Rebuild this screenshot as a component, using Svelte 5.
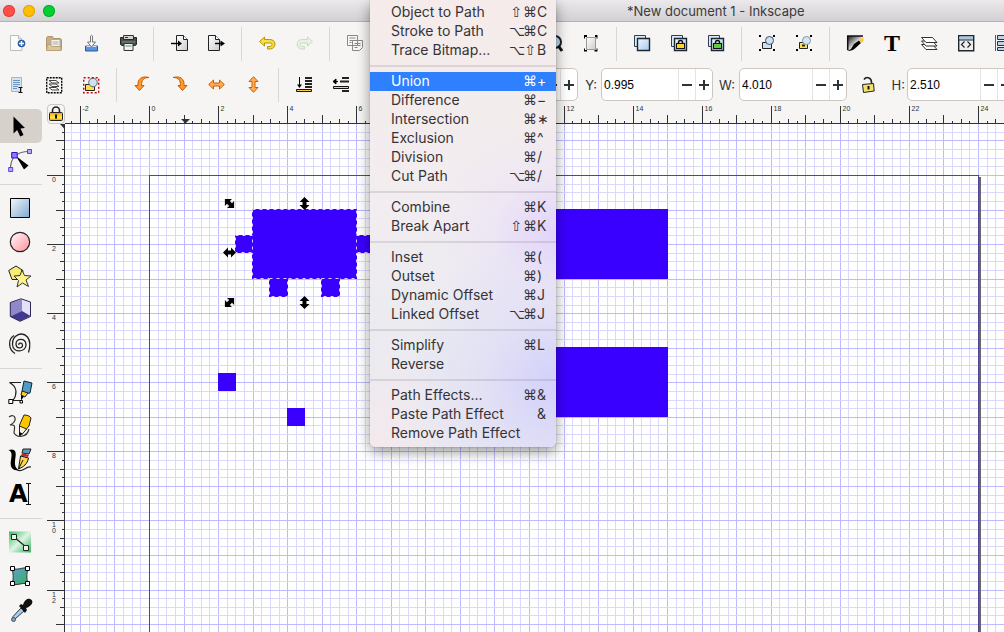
<script lang="ts">
    type Entry = { label: string; mods?: string; key?: string };

    const menuGroups: Entry[][] = [
        [
            { label: "Object to Path", mods: "⇧⌘", key: "C" },
            { label: "Stroke to Path", mods: "⌥⌘", key: "C" },
            { label: "Trace Bitmap...", mods: "⌥⇧", key: "B" },
        ],
        [
            { label: "Union", mods: "⌘", key: "+" },
            { label: "Difference", mods: "⌘", key: "−" },
            { label: "Intersection", mods: "⌘", key: "∗" },
            { label: "Exclusion", mods: "⌘", key: "^" },
            { label: "Division", mods: "⌘", key: "/" },
            { label: "Cut Path", mods: "⌥⌘", key: "/" },
        ],
        [
            { label: "Combine", mods: "⌘", key: "K" },
            { label: "Break Apart", mods: "⇧⌘", key: "K" },
        ],
        [
            { label: "Inset", mods: "⌘", key: "(" },
            { label: "Outset", mods: "⌘", key: ")" },
            { label: "Dynamic Offset", mods: "⌘", key: "J" },
            { label: "Linked Offset", mods: "⌥⌘", key: "J" },
        ],
        [{ label: "Simplify", mods: "⌘", key: "L" }, { label: "Reverse" }],
        [
            { label: "Path Effects...", mods: "⌘", key: "&" },
            { label: "Paste Path Effect", key: "&" },
            { label: "Remove Path Effect" },
        ],
    ];

    const commands = [
        "new", "open", "save", "print", "|",
        "import", "export", "|",
        "undo", "redo", "|",
        "copy", "copy", "copy", "|",
        "zoom", "zoom", "zoom", "zoom page", "|",
        "duplicate", "clone", "unlink clone", "|",
        "group", "ungroup", "|",
        "fill and stroke", "text dialog", "layers", "xml editor", "align",
    ];
    const selectActions = [
        "select all", "select in layers", "deselect", "|",
        "rotate left", "rotate right", "flip horizontal", "flip vertical", "|",
        "to bottom", "lower", "lower", "lower", "|",
    ];
    const tools = [
        "selector", "node", "|",
        "rectangle", "ellipse", "star", "box", "spiral", "|",
        "pen", "pencil", "calligraphy", "text", "|",
        "gradient", "mesh", "dropper",
    ];

    const lock = (fill: string) =>
        `<path d="M7.500 9V7.500a2 2 0 0 1 4 0V9" fill="none" stroke="#111" stroke-width="1.500"/><rect x="5.500" y="8.500" width="8" height="5" fill="${fill}" stroke="#111"/>`;
    const squares =
        `<path d="M.5 .5h11v11H.5z" fill="#dbe8f5" stroke="#2f3e52"/><path d="M3.500 3.500h12v12h-12z" fill="url(#blue)" stroke="#1c2733" stroke-width="1.400"/>`;
    const corners =
        `<path d="M0 0h2v2H0zM14 0h2v2h-2zM0 14h2v2H0zM14 14h2v2h-2z" fill="#000"/>`;
    const curve =
        `M.5 6.500 5.500 2v2.500h5c3.500 0 5.500 2 5.500 4.500s-2 5-5 5H8.500v-2.500h2.500c1.300 0 2-1 2-2.200S12.200 8 11 8H5.500v3z`;
    const turn =
        `M15 1.500C9.500 1.500 7.500 4 7.500 9.500H10L5.500 14.500 1 9.500h3C3.500 3 7.500-.5 15 1.500z`;

    const icons: Record<string, string> = {
        new: `<path d="M1.500 .5h8l3.500 3.500v11.500H1.500z" fill="#fbfbfb" stroke="#b9c0c0"/><path d="M9.500 .5V4H13" fill="#e5e8e8" stroke="#b9c0c0"/><circle cx="12.500" cy="8.500" r="3.800" fill="#2c5ba8"/><path d="M12.500 6v5M10 8.500h5" stroke="#fff" stroke-width="1.500"/>`,
        open: `<path d="M.5 15V2.500l1-1h5l1 2h7l1 1V15z" fill="#c9ae80" stroke="#b0966b"/><path d="M5 4.500h9v8H5z" fill="#f3f3ef" stroke="#aaa"/><path d="M6.500 7h6M6.500 9h6" stroke="#aaa"/><path d="M.5 15.500l1-6h3l2 2h8.500v4z" fill="#dcc59d" stroke="#bca077"/>`,
        save: `<path d="M2.500 11h12v5h-12z" fill="#5b93dc" stroke="#245aa6"/><path d="M3.500 11.500h10" stroke="#cfe2ff"/><path d="M7.500 1q1-1.500 2 0v6h3L8.500 12 4.500 7h3z" fill="#f5f5f5" stroke="#777"/>`,
        print: `<path d="M3.500 .5h10v4h-10z" fill="#cfd6cf" stroke="#333"/><path d="M.5 2.500h3v2h10v-2h3v7l-1.500 1H2L.5 9.500z" fill="#4a504d" stroke="#252928"/><path d="M5 2.500h3" stroke="#333"/><path d="M2 7h13" stroke="#858b86"/><path d="M4 8.500h9v7H4z" fill="#eef6ec" stroke="#333"/><path d="M5.500 10h6v2h-6z" fill="#a9bda9"/>`,
        import: `<path d="M5.500 .5h7l4 4v11h-11z" fill="url(#paper)" stroke="#222"/><path d="M12.500 .5v4h4" fill="#fff" stroke="#222"/><path d="M0 8.500h9" stroke="#000" stroke-width="1.400"/><path d="M7 5.500 11 8.500l-4 3z"/>`,
        export: `<path d="M.5 .5h7l4 4v11H.5z" fill="url(#paper)" stroke="#222"/><path d="M7.500 .5v4h4" fill="#fff" stroke="#222"/><path d="M7 8.500h7" stroke="#000" stroke-width="1.400"/><path d="M12.500 5.500 17 8.500l-4.500 3z"/>`,
        undo: `<path d="${curve}" fill="#f4df4a" stroke="#b79400" stroke-linejoin="round"/>`,
        redo: `<g transform="matrix(-1 0 0 1 17 0)" opacity=".6"><path d="${curve}" fill="#dcf3d8" stroke="#a1cf9d" stroke-linejoin="round"/></g>`,
        copy: `<g fill="#f7f7f7" stroke="#888"><path d="M.5 .5h10v10H.5zM5.500 5.500h10v7l-3 3h-7z"/><path d="M2.500 3h6M2.500 5.500h3M2.500 7.500h2M7.500 8.500h6M7.500 10.500h6M7.500 12.500h3"/></g>`,
        zoom: `<circle cx="9" cy="7" r="6" fill="#bdd6ea" stroke="#17202a" stroke-width="2"/><path d="M12.500 11l3.500 5" stroke="#111" stroke-width="3"/>`,
        "zoom page": `<path d="M3.500 2.500h9v12h-9z" fill="url(#paper)" stroke="#999"/><path d="M2 0h2v2H2v1.500H1V0zM14 0h-2v2h1.500v1.500h1V0zM1 16.500v-3h1V15h2v1.500zM14.500 16.500v-3h-1V15h-2v1.500z"/>`,
        duplicate: squares,
        clone: squares + lock("#ffd42a"),
        "unlink clone": squares + lock("#68c840"),
        group: corners + `<path d="M3.500 7.500h9v6h-9z" fill="#cfe0f1" stroke="#222"/><circle cx="10.500" cy="5.500" r="4" fill="#cfe0f1" stroke="#3d5066"/>`,
        ungroup: corners + `<path d="M3.500 7.500h8v6h-8z" fill="#ffe14d" stroke="#222"/><path d="M6 10.500h3" stroke="#222" stroke-width="2"/><circle cx="10.500" cy="5.500" r="4" fill="#d5e4f2" stroke="#8294a6"/>`,
        "fill and stroke": `<path d="M.5 1h15L9 15H.5z" fill="url(#ink)"/><path d="M0 1h16M.7 1v14" stroke="#111" stroke-width="1.500"/><path d="M12 5.500l2 2.500-5 4.500C7 15 4 16 0 16l4-2 3-5z"/><path d="M16.500 2l-4.500 3.500 2 2.500 2.500-2z" fill="#ffc629"/>`,
        "text dialog": `<text x="0" y="16" font-family="Liberation Serif" font-weight="bold" font-size="24">T</text>`,
        layers: `<g fill="#fff" stroke="#333" stroke-linejoin="round"><path d="M.5 9.500h11l4.500 5H5z"/><path d="M.5 6h11l4.500 5H5z"/><path d="M.5 2.500h11l4.500 5H5z"/></g>`,
        "xml editor": `<path d="M.7 .7h15v15h-15z" fill="#eee" stroke="#1f2730" stroke-width="1.400"/><path d="M1.500 1.500h13.500v3H1.500z" fill="#a9c6e4"/><path d="M1 5h14" stroke="#1f2730"/><path d="M6.500 6.500 3.500 9.500l3 3M9.500 6.500l3 3-3 3" fill="none" stroke="#222" stroke-width="1.200"/>`,
        align: `<path d="M.5 0v16" stroke="#e02020"/><g fill="#bcd3ea" stroke="#26323f"><path d="M2.500 .5h8v4h-8zM2.500 6.500h12v4h-12zM2.500 12.500h9v3h-9z"/></g>`,
        "select all": `<path d="M2.500 1.500h10v14h-10z" fill="#d6e4f1" stroke="#a9b6c2"/><path d="M4 4.500h7M4 6.500h7M4 8.500h7M4 10.500h5M4 12.500h4" stroke="#6a93bd"/><path d="M9.500 11.500h4M9.500 16.500h4M11.500 12v4" stroke="#111"/>`,
        "select in layers": `<path d="M.7 1.700h15v15h-15z" fill="none" stroke="#000" stroke-width="1.400" stroke-dasharray="2 1"/><g fill="#fff" stroke="#444"><path d="M3 11.500h7l3 2.500H6z"/><path d="M3 8h7l3 2.500H6z"/><path d="M3 4.500h7L13 7H6z"/></g>`,
        deselect: `<path d="M2.500 8.500h9v6h-9z" fill="#ffdf45" stroke="#222"/><circle cx="10" cy="6.500" r="4.300" fill="#cfe0f1" stroke="#53677c"/><path d="M.7 1.700h15v15h-15z" fill="none" stroke="#d40000" stroke-width="1.400" stroke-dasharray="2 2"/>`,
        "rotate left": `<path d="${turn}" fill="#ff9a2e" stroke="#c65a00" stroke-linejoin="round"/>`,
        "rotate right": `<g transform="matrix(-1 0 0 1 17 0)"><path d="${turn}" fill="#ff9a2e" stroke="#c65a00" stroke-linejoin="round"/></g>`,
        "flip horizontal": `<path d="M.7 8.500 5.500 4v3h6V4l4.800 4.500-4.800 4.500v-3h-6v3z" fill="#ffae57" stroke="#cf5c00" stroke-linejoin="round"/>`,
        "flip vertical": `<path d="M8.500 .7 13 5.500h-3v6h3l-4.500 4.800L4 11.500h3v-6H4z" fill="#ffae57" stroke="#cf5c00" stroke-linejoin="round"/>`,
        "to bottom": `<path d="M9 2h7M9 5h7M9 8h7M9 11h7" stroke="#222" stroke-width="2"/><path d="M3.500 1v9" stroke="#000"/><path d="M1 8.500h5L3.500 12z"/><path d="M.5 13.500h15v2H.5z" fill="#ffd24a" stroke="#111"/>`,
        lower: `<path d="M9 2h7M9 15h7M7 5.500h9" stroke="#222" stroke-width="2"/><path d="M5 5.500H1.500M3 3v5L0 5.500z" stroke="#000"/><path d="M.5 10.500h15v2H.5z" fill="#ffd24a" stroke="#111"/>`,
        padlock: `<path d="M4 3.500Q6 .5 9 2t2.500 6" fill="none" stroke="#222" stroke-width="1.600"/><path d="M2.500 8.500l11-1 .7 7.500-10.700 1.500z" fill="#f3e36b" stroke="#222"/><path d="M8.500 10v3.500" stroke="#111" stroke-width="2"/>`,

        selector: `<path d="M5.500 2.500v17l3.700-3.500 3 6.500 3.300-1.500-3-6.500 4.500-.5z"/>`,
        node: `<path d="M2.500 21C2.500 10 8 3.500 21 3.500" fill="none" stroke="#666" stroke-width="1.200"/><path d="M8 8l12.500 9.500-4.500 4z"/><g fill="#b9a8ff" stroke="#5a3fe0"><path d="M.7 19.500h4v4h-4zM19.500 1.500h4v4h-4z"/><path d="M3.700 4.500h5.500v5.500H3.700z" fill="#8f78ff" stroke="#2f12c8"/></g>`,
        rectangle: `<path d="M2.500 2.500h19v19h-19z" fill="url(#blue2)" stroke="#000"/>`,
        ellipse: `<circle cx="12" cy="12" r="9.700" fill="url(#pink)" stroke="#222" stroke-width="1.200"/>`,
        star: `<path d="M.7 6.500 8 2l7 4.500-2 9H4z" fill="#f6ec74" stroke="#222"/><path d="M14 6l2.500 5.500 6.500.5-5 4 2.500 6.500-6-3.500L9 23l1.500-6.500L6 12l6-.5z" fill="#fdf489" stroke="#333" stroke-linejoin="round"/>`,
        box: `<path d="M13 .8 22.500 4v14.500L12 23.300 2.300 18.500V4.500z" fill="#cfcbec"/><path d="M2.300 4.500 14 1.500V13L2.300 18.500z" fill="#8f88c9"/><path d="M14 1.500 22.500 4v14L14 13z" fill="#e4e1f6"/><path d="M14 13l8.500 5L12 23 2.300 18.500z" fill="#43388f"/><path d="M13 .8 22.500 4v14.500L12 23.300 2.300 18.500V4.500z" fill="none" stroke="#2b2750"/>`,
        spiral: `<path d="M11 13c-1-2 3-3 3.500 0 .5 4-6.500 4-6.500-1 0-6 9.500-6.500 10 .5.500 8-13 9-13.500 0C4 3 14-1 19.500 5c3 4 3 9 1 15.500M7 21.500C0 17.500 0 7 6 3.500" fill="none" stroke="#222" stroke-width="1.300"/>`,
        pen: `<path d="M13 2.500H1.500C10 7 9 15 5 20.500h9" fill="none" stroke="#222" stroke-width="1.200"/><path d="M.8 19.500h4v4h-4zM12 20.500h2.500V23H12z" fill="#fff" stroke="#000"/><path d="M16 1l8 2-2 10-6 1-2-3z" fill="#4f9bc4" stroke="#123"/><path d="M14 11l6 2-3 4-4-2z" fill="#ffc928" stroke="#222"/><path d="M13 15l3 1.500-3 4z"/>`,
        pencil: `<path d="M1 3q5-3 6 1T2 11c7-1 4 4 4 8 3 5 13 5 15-4" fill="none" stroke="#333" stroke-width="1.200"/><path d="M16 1c3 0 6 1 7 3l-2 8-7 8-2.500 1V11z" fill="#ffc400" stroke="#222"/><path d="M11.500 12l7 3-5 6-2 .5z" fill="#fff5cf" stroke="#222"/><path d="M11.500 18l3 1.500-3 2.500z"/>`,
        calligraphy: `<path d="M.5 2c6-2 8 1 7 7-1 7-1 10 3 13C3 23 2 18 3 12 4 6 4 4 .5 2z"/><path d="M9 22c6 3 8-4 14-3" fill="none" stroke="#222" stroke-width="1.200"/><path d="M15 1h8l-2 5-7-1z" fill="#5d9cc0" stroke="#222"/><path d="M14 5l7 2-1 2-7-1z" fill="#c22"/><path d="M12.500 8l8 2c-1 6-5 9-10 11z" fill="#ffd64a" stroke="#111"/><path d="M11 20l4-8" stroke="#111"/>`,
        text: `<text x="1" y="20" font-family="DejaVu Sans" font-weight="bold" font-size="24">A</text><path d="M18 1.500h5M18 22.500h5M20.500 2v20" stroke="#111"/>`,
        gradient: `<path d="M1 1.500h22v21H1z" fill="url(#green)"/><path d="M6 7l12 10" stroke="#222" stroke-width="1.200"/><path d="M3.500 4.500h5v5h-5zM15.500 15.500h5v5h-5z" fill="#e9f6ec" stroke="#222"/>`,
        mesh: `<path d="M4 4c6 3 9-1 16 0-1 5-2 9 0 16-6-2-10 2-16 0 2-6 1-11 0-16z" fill="url(#mesh)" stroke="#333"/><path d="M2.500 2.500h4v4h-4zM17.500 2.500h4v4h-4zM2.500 17.500h4v4h-4zM17.500 17.500h4v4h-4z" fill="#fff" stroke="#000"/>`,
        dropper: `<path d="M13 10l3 3-9 8-2.500.5.500-3z" fill="#a9cdf0" stroke="#333"/><path d="M11 8l2-2 2 1c1-4 4-7 7-6s3 4 1 6-4 3-5 3l1 2-2 3z" fill="#111"/><circle cx="5.500" cy="21.500" r="2" fill="#7ba4cc" stroke="#456"/>`,
    };

    // Canvas geometry: one document unit in screen pixels, and where 0,0 falls.
    const unit = 829 / 24;
    const originX = 84;
    const originY = 51;

    let canvasWidth = $state(939);
    let canvasHeight = $state(508);

    function ticks(origin: number, length: number) {
        const list = [];
        for (let i = Math.ceil((-origin / unit) * 4); origin + (i * unit) / 4 < length; i++) {
            list.push({ i, pos: Math.round(origin + (i * unit) / 4) + 0.5 });
        }
        return list;
    }

    function tickLength(i: number): number {
        if (i % 8 === 0) return 18;
        if (i % 4 === 0) return 9;
        return i % 2 === 0 ? 5 : 3;
    }

    const columns = $derived(ticks(originX, canvasWidth));
    const rows = $derived(ticks(originY, canvasHeight));

    const selected = [
        [187, 85, 104, 69],
        [170, 111, 17, 17],
        [291, 111, 18, 17],
        [204, 154, 18, 18],
        [256, 154, 18, 18],
    ];
    const others = [
        [464, 85, 139, 70],
        [464, 223, 139, 70],
        [153, 249, 18, 18],
        [222, 284, 18, 18],
    ];
    const handles = [
        [164, 79, 45],
        [239, 79, 90],
        [164, 128, 0],
        [164, 178, 135],
        [239, 178, 90],
    ];
</script>

{#snippet icon(name: string, size: number)}
    <svg width={size} height={size} viewBox="0 0 {size} {size}" aria-hidden="true">{@html icons[name]}</svg>
{/snippet}

{#snippet spin(id: string, label: string, value: string, wide: boolean)}
    <label class="spin-label {id}" for={id}>{label}</label>
    <div class="spin" class:wide>
        <input {id} type="text" {value} />
        <button aria-label="Decrease {id}"><span class="bar"></span></button>
        <button aria-label="Increase {id}"><span class="bar"></span><span class="bar upright"></span></button>
    </div>
{/snippet}

<svg class="defs" width="0" height="0" aria-hidden="true">
    <defs>
        <linearGradient id="paper" x2="1" y2="1"><stop stop-color="#fff" /><stop offset="1" stop-color="#ccc" /></linearGradient>
        <linearGradient id="blue" x2="1" y2="1"><stop stop-color="#f2f8ff" /><stop offset="1" stop-color="#a5c8ec" /></linearGradient>
        <linearGradient id="blue2" x2="1" y2="1"><stop stop-color="#f2f7fb" /><stop offset="1" stop-color="#7fa9d2" /></linearGradient>
        <linearGradient id="pink" x2="1" y2="1"><stop stop-color="#fff" /><stop offset="1" stop-color="#ff8d99" /></linearGradient>
        <linearGradient id="ink" x2="1" y2="1"><stop stop-color="#111" /><stop offset=".6" stop-color="#eee" /></linearGradient>
        <linearGradient id="green" x2="1" y2="1"><stop stop-color="#2fbf60" /><stop offset=".5" stop-color="#dff3e4" /><stop offset="1" stop-color="#2fb35a" /></linearGradient>
        <linearGradient id="mesh" x2="1" y2="1"><stop stop-color="#5e9fd0" /><stop offset="1" stop-color="#38b05e" /></linearGradient>
        <linearGradient id="gold" y2="1" x2="0"><stop stop-color="#f39c00" /><stop offset=".6" stop-color="#ffe94a" /><stop offset="1" stop-color="#f39c00" /></linearGradient>
    </defs>
</svg>

<div class="window">
    <header class="titlebar">
        <button class="light close" aria-label="Close"></button>
        <button class="light minimize" aria-label="Minimize"></button>
        <button class="light maximize" aria-label="Zoom"></button>
        <span class="title">*New document 1 - Inkscape</span>
    </header>

    <div class="toolbar commands">
        {#each commands as name}
            {#if name === "|"}
                <span class="divider"></span>
            {:else}
                <button class="tool-button" aria-label={name}>{@render icon(name, 17)}</button>
            {/if}
        {/each}
    </div>

    <div class="toolbar controls">
        {#each selectActions as name}
            {#if name === "|"}
                <span class="divider"></span>
            {:else}
                <button class="tool-button" aria-label={name}>{@render icon(name, 17)}</button>
            {/if}
        {/each}
        {@render spin("x", "X:", "2.495", true)}
        {@render spin("y", "Y:", "0.995", true)}
        {@render spin("w", "W:", "4.010", false)}
        <button class="tool-button ratio" aria-label="Lock width and height">{@render icon("padlock", 17)}</button>
        {@render spin("h", "H:", "2.510", false)}
    </div>

    <div class="workspace">
        <nav class="toolbox">
            {#each tools as name}
                {#if name === "|"}
                    <span class="rule"></span>
                {:else}
                    <button class="tool" class:active={name === "selector"} aria-label={name}>{@render icon(name, 24)}</button>
                {/if}
            {/each}
        </nav>

        <div class="editor">
            <button class="guide-lock" aria-label="Lock guides">
                <svg width="16" height="16" viewBox="0 0 16 16">
                    <path d="M4.500 7V4.500a3.500 3.500 0 0 1 7 0V7" fill="none" stroke="#222" stroke-width="1.600" />
                    <rect x="1.500" y="6.500" width="13" height="8" rx="1" fill="url(#gold)" stroke="#222" />
                    <path d="M8 8.500v4" stroke="#111" stroke-width="2" />
                </svg>
            </button>

            <svg class="ruler horizontal" width="100%" height="20">
                {#each columns as { i, pos }}
                    <line x1={pos} x2={pos} y1={20 - tickLength(i)} y2="20" />
                    {#if i % 8 === 0}<text x={pos + 2} y="7">{i / 4}</text>{/if}
                {/each}
                <line x1="0" x2="100%" y1="19.500" y2="19.500" />
                <path d="M116 15h9l-4.500 4.500z" />
            </svg>

            <svg class="ruler vertical" width="18" height="100%">
                {#each rows as { i, pos }}
                    <line y1={pos} y2={pos} x1={18 - tickLength(i)} x2="18" />
                    {#if i % 8 === 0}
                        {#each String(i / 4) as digit, n}
                            <text x="5" y={pos + 6 + n * 6}>{digit}</text>
                        {/each}
                    {/if}
                {/each}
                <line y1="0" y2="100%" x1="17.500" x2="17.500" />
                <path d="M13 0h4.500v5z" />
            </svg>

            <div class="canvas" bind:clientWidth={canvasWidth} bind:clientHeight={canvasHeight}>
                <svg width="100%" height="100%">
                    {#each columns as { i, pos }}
                        <line class="grid" class:major={i % 4 === 0} x1={pos} x2={pos} y1="0" y2="100%" />
                    {/each}
                    {#each rows as { i, pos }}
                        <line class="grid" class:major={i % 4 === 0} y1={pos} y2={pos} x1="0" x2="100%" />
                    {/each}

                    <rect class="page-shadow" x="914" y="53" width="2" height="800" />
                    <rect class="page" x="84.500" y="51.500" width="829" height="900" />

                    {#each others as [x, y, width, height]}
                        <rect class="shape" {x} {y} {width} {height} />
                    {/each}
                    {#each selected as [x, y, width, height]}
                        <rect class="shape" {x} {y} width={width + 1} height={height + 1} />
                        <rect class="outline" x={x + 0.5} y={y + 0.5} {width} {height} />
                    {/each}
                    {#each handles as [x, y, angle]}
                        <path
                            d="M-6.500 0-1.500-5v3h3v-3l5 5-5 5v-3h-3v3z"
                            transform="translate({x + 0.5} {y + 0.5}) rotate({angle})"
                        />
                    {/each}
                </svg>
            </div>
        </div>
    </div>

    <div class="menu" role="menu">
        {#each menuGroups as group, g}
            {#if g > 0}<hr />{/if}
            {#each group as item}
                <button class="item" class:highlighted={item.label === "Union"} role="menuitem">
                    <span class="label">{item.label}</span>
                    {#each item.mods ?? "" as mod}<span class="mod">{mod}</span>{/each}
                    <span class="key">{item.key ?? ""}</span>
                </button>
            {/each}
        {/each}
    </div>
</div>

<style>
    :global(body) {
        margin: 0;
    }

    button {
        appearance: none;
        border: 0;
        padding: 0;
        margin: 0;
        background: none;
        color: inherit;
        font: inherit;
    }

    svg {
        display: block;
    }

    .defs {
        position: absolute;
    }

    .window {
        position: relative;
        display: flex;
        flex-direction: column;
        height: 100vh;
        overflow: hidden;
        background: #f6f5f4;
        color: #2e3436;
        font-family: Inter, "Liberation Sans", sans-serif;
        font-size: 13px;
    }

    .titlebar {
        display: flex;
        align-items: center;
        flex: none;
        gap: 8px;
        height: 21px;
        padding-left: 3px;
        border-bottom: 1px solid #b4b2b4;
        background: linear-gradient(#ebe9eb, #d2d0d2);
    }

    .light {
        width: 12px;
        height: 12px;
        border-radius: 50%;
    }

    .close {
        background: #ff4f48;
        box-shadow: inset 0 0 0 1px #e0403a;
    }

    .minimize {
        background: #ffbd05;
        box-shadow: inset 0 0 0 1px #e0a303;
    }

    .maximize {
        background: #05cf30;
        box-shadow: inset 0 0 0 1px #04b029;
    }

    .title {
        margin-left: 564px;
        color: #3c3a3c;
        white-space: nowrap;
    }

    .toolbar {
        display: flex;
        align-items: center;
        flex: none;
        margin-left: -1px;
    }

    .commands {
        height: 43px;
    }

    .controls {
        height: 39px;
    }

    .tool-button {
        display: grid;
        place-items: center;
        flex: none;
        width: 37px;
        height: 33px;
    }

    .tool-button svg,
    .tool svg {
        overflow: visible;
    }

    .ratio {
        width: 43px;
    }

    .divider {
        flex: none;
        width: 1px;
        height: 34px;
        margin: 0 7px 0 6px;
        background: #d9d7d5;
    }

    .spin-label {
        box-sizing: border-box;
        flex: none;
        padding-right: 4px;
        text-align: right;
    }

    .x {
        width: 18px;
    }

    .y {
        width: 23px;
    }

    .w {
        width: 26px;
    }

    .h {
        width: 17px;
        padding-right: 2px;
    }

    .spin {
        display: flex;
        flex: none;
        box-sizing: border-box;
        width: 108px;
        height: 33px;
        border: 1px solid #cdc7c2;
        border-radius: 5px;
        background: #fff;
    }

    .spin.wide {
        width: 112px;
    }

    .spin input {
        flex: 1;
        min-width: 0;
        padding: 0 2px;
        border: 0;
        background: none;
        color: #000;
        font-family: "Liberation Sans", Arial, sans-serif;
        font-size: 12px;
    }

    .spin button {
        display: grid;
        place-items: center;
        width: 17px;
        border-left: 1px solid #e6e3e0;
    }

    .bar {
        grid-area: 1 / 1;
        width: 10px;
        height: 2px;
        background: #2e3436;
    }

    .upright {
        width: 2px;
        height: 10px;
    }

    .workspace {
        display: flex;
        flex: 1;
        gap: 5px;
        min-height: 0;
    }

    .toolbox {
        display: flex;
        flex-direction: column;
        flex: none;
        width: 42px;
        padding-top: 5px;
    }

    .tool {
        display: grid;
        place-items: center start;
        flex: none;
        height: 34px;
        padding-left: 8px;
        border-radius: 0 5px 5px 0;
    }

    .tool.active {
        background: #d6d1cb;
    }

    .rule {
        flex: none;
        height: 1px;
        margin: 7px 0 6px;
        background: #d9d7d5;
    }

    .editor {
        display: grid;
        grid-template: 20px 1fr / 18px 1fr;
        flex: 1;
        min-width: 0;
        min-height: 0;
    }

    .guide-lock {
        display: grid;
        place-items: center;
        border: 1px solid #cdc7c2;
        border-radius: 4px;
    }

    .ruler line {
        stroke: #2e3436;
    }

    .ruler path {
        fill: #2e3436;
    }

    .ruler text {
        fill: #2e3436;
        font-family: "Liberation Sans", Arial, sans-serif;
        font-size: 7px;
    }

    .canvas {
        min-width: 0;
        min-height: 0;
        overflow: hidden;
        background: #fff;
    }

    .grid {
        stroke: #dadaff;
    }

    .major {
        stroke: #bdbaff;
    }

    .page {
        fill: none;
        stroke: #50458f;
    }

    .page-shadow {
        fill: #66646c;
    }

    .shape {
        fill: #3a00ff;
    }

    .outline {
        fill: none;
        stroke: #d8ccff;
        stroke-dasharray: 3 4;
    }

    .menu {
        position: absolute;
        top: 0;
        left: 370px;
        box-sizing: border-box;
        width: 186px;
        padding: 3px 0 4px;
        border-radius: 0 0 5px 5px;
        background:
            radial-gradient(ellipse 130px 110px at 100% 52%, #e2d4fb, rgba(232, 222, 250, 0.4) 50%, rgba(235, 230, 245, 0)),
            radial-gradient(ellipse 150px 150px at 100% 86%, #d3d0fb, rgba(218, 216, 248, 0.5) 50%, rgba(230, 230, 245, 0)),
            radial-gradient(circle at 0 100%, #f4e9ec, rgba(240, 234, 240, 0) 100px),
            linear-gradient(#f5ebea, #f2edf0 45%, #ebebf0 70%, #eaeaf1);
        box-shadow: 0 5px 14px rgba(0, 0, 0, 0.4), 0 0 1px rgba(0, 0, 0, 0.5);
        color: #363338;
        font-size: 14px;
    }

    .menu hr {
        height: 2px;
        margin: 5px 0;
        border: 0;
        background: rgba(60, 40, 60, 0.12);
    }

    .item {
        display: flex;
        align-items: center;
        box-sizing: border-box;
        width: 100%;
        height: 19px;
        padding: 0 7px 2px 21px;
        text-align: left;
        white-space: nowrap;
    }

    .item.highlighted {
        background: #2f80ff;
        color: #fff;
    }

    .label {
        flex: 1;
    }

    .mod {
        width: 14px;
        font-family: "DejaVu Sans", sans-serif;
        text-align: center;
    }

    .key {
        width: 12px;
    }
</style>
